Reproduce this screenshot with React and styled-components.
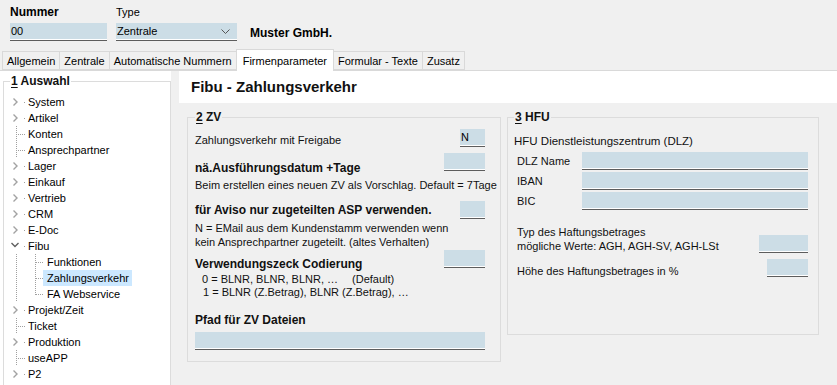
import React from 'react';
import styled, { createGlobalStyle } from 'styled-components';

const GlobalStyle = createGlobalStyle`
  html, body {
    margin: 0;
    padding: 0;
    background: #f0f0f0;
  }
  body {
    font-family: "Liberation Sans", Arial, sans-serif;
    font-size: 11px;
    color: #000;
  }
  * {
    box-sizing: border-box;
  }
`;

const Window = styled.div`
  width: 837px;
  height: 385px;
  overflow: hidden;
  background: #f0f0f0;
  display: flex;
  flex-direction: column;
`;

const Header = styled.div`
  height: 49px;
  display: flex;
  align-items: flex-end;
  padding: 5px 0 8px 10px;
`;

const HeadField = styled.div`
  display: flex;
  flex-direction: column;
  gap: 4px;
  margin-right: ${(props) => props.$gap || 0}px;
`;

const HeadLabel = styled.div`
  line-height: 14px;
  font-size: ${(props) => (props.$bold ? 12 : 11)}px;
  font-weight: ${(props) => (props.$bold ? 'bold' : 'normal')};
`;

const Company = styled.div`
  font-weight: bold;
  font-size: 12px;
  line-height: 14px;
  margin-bottom: 1px;
`;

const Input = styled.div`
  width: ${(props) => (props.$w ? `${props.$w}px` : '100%')};
  height: 18px;
  flex-shrink: 0;
  background: #ccdde6;
  border-bottom: 1px solid #5d5d5d;
  box-shadow: inset 0 -1px 0 #fff;
  padding-left: 1px;
  line-height: 17px;
  font-size: 11px;
  display: flex;
  align-items: center;
  justify-content: space-between;
`;

const ComboArrow = styled.svg`
  margin-right: 7px;
`;

const TabBar = styled.div`
  height: 22px;
  display: flex;
  align-items: flex-end;
  padding-left: 3px;
  border-bottom: 1px solid #d9d9d9;
`;

const Tab = styled.div`
  height: ${(props) => (props.$active ? 22 : 19)}px;
  padding: 0 ${(props) => (props.$active ? 6 : 4)}px;
  margin-bottom: ${(props) => (props.$active ? -1 : 0)}px;
  background: ${(props) => (props.$active ? '#fff' : '#f0f0f0')};
  border: 1px solid #d9d9d9;
  border-bottom: ${(props) => (props.$active ? 'none' : '1px solid #d9d9d9')};
  margin-left: -1px;
  display: flex;
  align-items: center;
  font-size: 11px;
  white-space: nowrap;
`;

const Body = styled.div`
  flex: 1;
  display: flex;
  min-height: 0;
`;

const TreePane = styled.div`
  width: 171px;
  background: #fff;
  padding: 3px 0 0 3px;
  overflow: hidden;
`;

const Group = styled.fieldset`
  margin: 0;
  border: 1px solid #dcdcdc;
  padding: ${(props) => props.$pad || '0'};
  width: ${(props) => props.$w}px;
  min-width: 0;
  align-self: flex-start;
`;

const Legend = styled.legend`
  font-weight: bold;
  font-size: 12px;
  line-height: 14px;
  padding: 0 1px;
  margin-left: ${(props) => props.$ml || 0}px;
  color: #111;

  u {
    text-decoration: underline;
    text-underline-offset: 2px;
  }
`;

const TreeList = styled.div`
  padding-top: 6px;
  height: 320px;
`;

const TreeRow = styled.div`
  height: 16px;
  display: flex;
  align-items: center;
`;

const TreeText = styled.span`
  height: 16px;
  line-height: 16px;
  padding: 0 3px 0 ${(props) => (props.$child ? 4 : 3)}px;
  background: ${(props) => (props.$selected ? '#cce8ff' : 'transparent')};
  white-space: nowrap;
`;

const ContentPane = styled.div`
  flex: 1;
  padding-left: 8px;
  display: flex;
  flex-direction: column;
`;

const TitleBar = styled.div`
  height: 32px;
  background: #fff;
  padding-left: 12px;
  font-weight: bold;
  font-size: 15px;
  line-height: 32px;
  color: #111;
`;

const Groups = styled.div`
  display: flex;
  gap: 6px;
  padding: 7px 0 0 8px;
  align-items: flex-start;
`;

const Row = styled.div`
  display: flex;
  justify-content: space-between;
  align-items: ${(props) => props.$align || 'flex-end'};
  margin-top: ${(props) => props.$mt || 0}px;
`;

const Label = styled.div`
  line-height: 14px;
  font-size: ${(props) => (props.$bold ? 12 : 11)}px;
  font-weight: ${(props) => (props.$bold ? 'bold' : 'normal')};
  margin-bottom: ${(props) => props.$mb || 0}px;
  color: #111;
`;

const Text = styled.div`
  line-height: ${(props) => props.$lh || 14}px;
  margin-top: ${(props) => props.$mt || 0}px;
  padding-left: ${(props) => props.$indent || 0}px;
  white-space: nowrap;
  color: #111;
`;

const Gap = styled.span`
  display: inline-block;
  width: 14px;
`;

const Heading = styled.div`
  font-size: 11.5px;
  line-height: 14px;
  color: #111;
`;

const FormGrid = styled.div`
  display: grid;
  grid-template-columns: 65px 1fr;
  row-gap: 2px;
  margin-top: 4px;
  padding-left: 3px;
  align-items: center;
`;

const Stack = styled.div`
  padding-left: 3px;
`;

const tree = [
  { label: 'System', kind: 'closed' },
  { label: 'Artikel', kind: 'closed' },
  { label: 'Konten', kind: 'leaf' },
  { label: 'Ansprechpartner', kind: 'leaf' },
  { label: 'Lager', kind: 'closed' },
  { label: 'Einkauf', kind: 'closed' },
  { label: 'Vertrieb', kind: 'closed' },
  { label: 'CRM', kind: 'closed' },
  { label: 'E-Doc', kind: 'closed' },
  { label: 'Fibu', kind: 'open' },
  { label: 'Funktionen', kind: 'child' },
  { label: 'Zahlungsverkehr', kind: 'child', selected: true },
  { label: 'FA Webservice', kind: 'child', last: true },
  { label: 'Projekt/Zeit', kind: 'closed' },
  { label: 'Ticket', kind: 'leaf' },
  { label: 'Produktion', kind: 'closed' },
  { label: 'useAPP', kind: 'leaf' },
  { label: 'P2', kind: 'closed' },
];

const dot = { stroke: '#a0a0a0', strokeWidth: 1, strokeDasharray: '1 1', shapeRendering: 'crispEdges' };

const TreeGlyph = ({ kind, last }) => {
  if (kind === 'child') {
    return (
      <svg width="39" height="16" viewBox="0 0 39 16">
        <line x1="12.5" y1="0" x2="12.5" y2="16" {...dot} />
        <line x1="31.5" y1="0" x2="31.5" y2={last ? 9 : 16} {...dot} />
        <line x1="32" y1="8.5" x2="39" y2="8.5" {...dot} />
      </svg>
    );
  }
  return (
    <svg width="21" height="16" viewBox="0 0 21 16">
      {kind === 'leaf' && (
        <>
          <line x1="12.5" y1="0" x2="12.5" y2="16" {...dot} />
          <line x1="14" y1="8.5" x2="21" y2="8.5" {...dot} />
        </>
      )}
      {kind === 'closed' && (
        <>
          <polyline points="9.5,4.5 13,8 9.5,11.5" fill="none" stroke="#a2a2a2" strokeWidth="1.4" />
          <rect x="20" y="8" width="1" height="1" fill="#a0a0a0" />
        </>
      )}
      {kind === 'open' && (
        <>
          <polyline points="7.5,5 11,8.5 14.5,5" fill="none" stroke="#606060" strokeWidth="1.4" />
          <rect x="20" y="8" width="1" height="1" fill="#a0a0a0" />
        </>
      )}
    </svg>
  );
};

const tabs = ['Allgemein', 'Zentrale', 'Automatische Nummern', 'Firmenparameter', 'Formular - Texte', 'Zusatz'];

const App = () => (
  <Window>
    <GlobalStyle />
    <Header>
      <HeadField $gap={9}>
        <HeadLabel $bold>Nummer</HeadLabel>
        <Input $w={97}>00</Input>
      </HeadField>
      <HeadField $gap={13}>
        <HeadLabel>Type</HeadLabel>
        <Input $w={121}>
          Zentrale
          <ComboArrow width="9" height="5" viewBox="0 0 9 5">
            <polyline points="0.5,0.5 4.5,4.5 8.5,0.5" fill="none" stroke="#555" strokeWidth="1" />
          </ComboArrow>
        </Input>
      </HeadField>
      <Company>Muster GmbH.</Company>
    </Header>

    <TabBar>
      {tabs.map((t) => (
        <Tab key={t} $active={t === 'Firmenparameter'}>
          {t}
        </Tab>
      ))}
    </TabBar>

    <Body>
      <TreePane>
        <Group $w={168}>
          <Legend $ml={6}>
            <u>1</u> Auswahl
          </Legend>
          <TreeList>
            {tree.map((item) => (
              <TreeRow key={item.label}>
                <TreeGlyph kind={item.kind} last={item.last} />
                <TreeText $child={item.kind === 'child'} $selected={item.selected}>
                  {item.label}
                </TreeText>
              </TreeRow>
            ))}
          </TreeList>
        </Group>
      </TreePane>

      <ContentPane>
        <TitleBar>Fibu - Zahlungsverkehr</TitleBar>
        <Groups>
          <Group $w={314} $pad="5px 15px 11px 7px">
            <Legend>
              <u>2</u> ZV
            </Legend>
            <Row>
              <Label>Zahlungsverkehr mit Freigabe</Label>
              <Input $w={25}>N</Input>
            </Row>
            <Row $mt={6}>
              <Label $bold $mb={-4}>nä.Ausführungsdatum +Tage</Label>
              <Input $w={41} />
            </Row>
            <Text $mt={7}>Beim erstellen eines neuen ZV als Vorschlag. Default = 7Tage</Text>
            <Row $mt={9} $align="center">
              <Label $bold>für Aviso nur zugeteilten ASP verwenden.</Label>
              <Input $w={25} />
            </Row>
            <Text $mt={2}>N = EMail aus dem Kundenstamm verwenden wenn</Text>
            <Text>kein Ansprechpartner zugeteilt. (altes Verhalten)</Text>
            <Row $mt={1}>
              <Label $bold $mb={-3}>Verwendungszeck Codierung</Label>
              <Input $w={41} />
            </Row>
            <Text $mt={5} $lh={13} $indent={7}>
              0 = BLNR, BLNR, BLNR, …<Gap />(Default)
            </Text>
            <Text $lh={13} $indent={8}>1 = BLNR (Z.Betrag), BLNR (Z.Betrag), …</Text>
            <Row $mt={14}>
              <Label $bold>Pfad für ZV Dateien</Label>
            </Row>
            <Row $mt={5}>
              <Input />
            </Row>
          </Group>

          <Group $w={312} $pad="10px 10px 57px 6px">
            <Legend>
              <u>3</u> HFU
            </Legend>
            <Heading>HFU Dienstleistungszentrum (DLZ)</Heading>
            <FormGrid>
              <Label>DLZ Name</Label>
              <Input />
              <Label>IBAN</Label>
              <Input />
              <Label>BIC</Label>
              <Input />
            </FormGrid>
            <Row $mt={15}>
              <Stack>
                <Text>Typ des Haftungsbetrages</Text>
                <Text>mögliche Werte: AGH, AGH-SV, AGH-LSt</Text>
              </Stack>
              <Input $w={49} />
            </Row>
            <Row $mt={6}>
              <Stack>
                <Label $mb={-1}>Höhe des Haftungsbetrages in %</Label>
              </Stack>
              <Input $w={41} />
            </Row>
          </Group>
        </Groups>
      </ContentPane>
    </Body>
  </Window>
);

export default App;
